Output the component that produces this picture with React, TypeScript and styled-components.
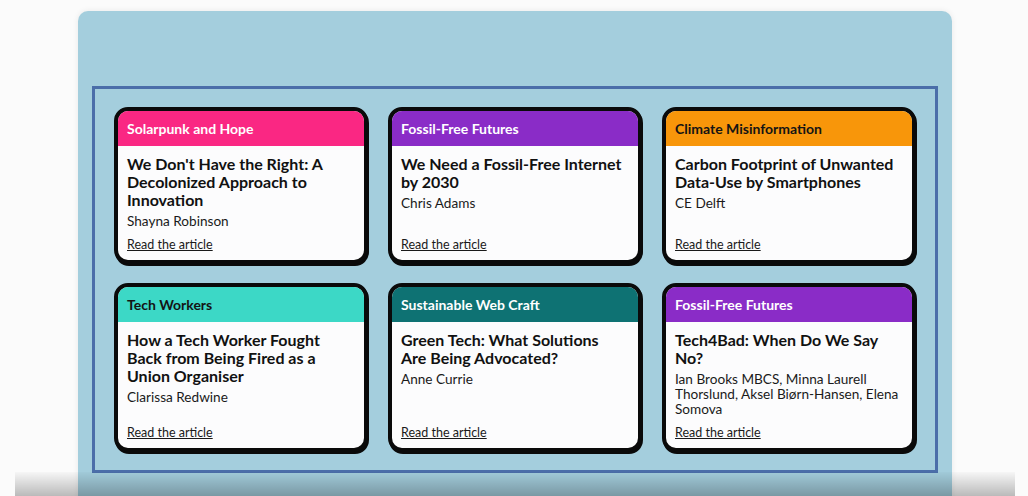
import React from "react";
import styled, { createGlobalStyle } from "styled-components";

const Global = createGlobalStyle`
  html, body { margin: 0; padding: 0; background: #fbfbfb; overflow: hidden; }
  body { font-family: Lato, "Noto Sans", sans-serif; }
  * { box-sizing: border-box; }
`;

const Page = styled.div`
  width: 1028px;
  height: 496px;
  padding: 11px 76px 0 78px;
  overflow: hidden;
  position: relative;
`;

const Panel = styled.section`
  width: 874px;
  height: 520px;
  background: #a4cedd;
  border-radius: 10px;
  box-shadow: 0 0 6px rgba(0, 0, 0, 0.08);
  padding: 75px 14px 0 14px;
`;

const Frame = styled.div`
  border: 3px solid #4b6ea9;
  padding: 18px 19px 18px 19px;
  display: grid;
  grid-template-columns: repeat(3, 254px);
  grid-template-rows: 157px 169px;
  column-gap: 20px;
  row-gap: 19px;
`;

const Card = styled.article`
  background: #fcfcfd;
  border: 4px solid #0a0a0a;
  border-radius: 14px;
  box-shadow: 1px 2px 0 #0a0a0a;
  overflow: hidden;
  display: flex;
  flex-direction: column;
`;

const Tag = styled.div<{ $bg: string; $dark?: boolean }>`
  background: ${(p) => p.$bg};
  color: ${(p) => (p.$dark ? "#141414" : "#ffffff")};
  height: 35px;
  flex: 0 0 35px;
  display: flex;
  align-items: center;
  padding: 0 9px;
  font-size: 14px;
  font-weight: 700;
`;

const Body = styled.div`
  flex: 1;
  display: flex;
  flex-direction: column;
  padding: 9px 9px 8px 9px;
`;

const Title = styled.h3`
  margin: 0;
  padding-right: 3px;
  font-size: 16px;
  line-height: 18px;
  font-weight: 700;
  color: #111;
`;

const Author = styled.p`
  margin: 5px 0 0 0;
  font-size: 13.6px;
  line-height: 15px;
  color: #1a1a1a;
`;

const Link = styled.a`
  margin-top: auto;
  font-size: 12.5px;
  line-height: 14px;
  color: #1a1a1a;
  text-decoration: underline;
`;

const BottomFade = styled.div`
  position: absolute;
  left: 15px;
  right: 13px;
  bottom: 0;
  height: 24px;
  background: linear-gradient(rgba(0, 0, 0, 0.02), rgba(0, 0, 0, 0.26));
  pointer-events: none;
`;

const items = [
  { tag: "Solarpunk and Hope", bg: "#fa2783", title: "We Don't Have the Right: A Decolonized Approach to Innovation", author: "Shayna Robinson" },
  { tag: "Fossil-Free Futures", bg: "#8a2cc7", title: "We Need a Fossil-Free Internet by 2030", author: "Chris Adams" },
  { tag: "Climate Misinformation", bg: "#f8960a", dark: true, title: "Carbon Footprint of Unwanted Data-Use by Smartphones", author: "CE Delft" },
  { tag: "Tech Workers", bg: "#3cd8c6", dark: true, title: "How a Tech Worker Fought Back from Being Fired as a Union Organiser", author: "Clarissa Redwine" },
  { tag: "Sustainable Web Craft", bg: "#0e7273", title: "Green Tech: What Solutions Are Being Advocated?", author: "Anne Currie" },
  { tag: "Fossil-Free Futures", bg: "#8a2cc7", title: "Tech4Bad: When Do We Say No?", author: "Ian Brooks MBCS, Minna Laurell Thorslund, Aksel Biørn-Hansen, Elena Somova" },
];

export default function App() {
  return (
    <>
      <Global />
      <Page>
        <Panel>
          <Frame>
            {items.map((it, i) => (
              <Card key={i}>
                <Tag $bg={it.bg} $dark={it.dark}>{it.tag}</Tag>
                <Body>
                  <Title>{it.title}</Title>
                  <Author>{it.author}</Author>
                  <Link href="#">Read the article</Link>
                </Body>
              </Card>
            ))}
          </Frame>
        </Panel>
        <BottomFade />
      </Page>
    </>
  );
}
